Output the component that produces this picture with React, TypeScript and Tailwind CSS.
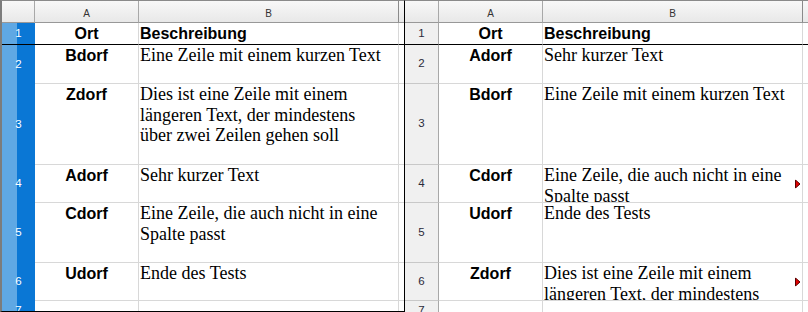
import React from "react";

type Row = { n: number; a: string; b: string[]; mark?: boolean };

const SANS = "font-['Liberation_Sans',Arial,sans-serif]";
const SERIF = "font-['Liberation_Serif','Times_New_Roman',serif]";

const leftRows: Row[] = [
  { n: 1, a: "Ort", b: ["Beschreibung"] },
  { n: 2, a: "Bdorf", b: ["Eine Zeile mit einem kurzen Text"] },
  {
    n: 3,
    a: "Zdorf",
    b: [
      "Dies ist eine Zeile mit einem",
      "längeren Text, der mindestens",
      "über zwei Zeilen gehen soll",
    ],
  },
  { n: 4, a: "Adorf", b: ["Sehr kurzer Text"] },
  { n: 5, a: "Cdorf", b: ["Eine Zeile, die auch nicht in eine", "Spalte passt"] },
  { n: 6, a: "Udorf", b: ["Ende des Tests"] },
  { n: 7, a: "", b: [] },
];

const rightRows: Row[] = [
  { n: 1, a: "Ort", b: ["Beschreibung"] },
  { n: 2, a: "Adorf", b: ["Sehr kurzer Text"] },
  { n: 3, a: "Bdorf", b: ["Eine Zeile mit einem kurzen Text"] },
  { n: 4, a: "Cdorf", b: ["Eine Zeile, die auch nicht in eine", "Spalte passt"], mark: true },
  { n: 5, a: "Udorf", b: ["Ende des Tests"] },
  {
    n: 6,
    a: "Zdorf",
    b: [
      "Dies ist eine Zeile mit einem",
      "längeren Text, der mindestens",
      "über zwei Zeilen gehen soll",
    ],
    mark: true,
  },
  { n: 7, a: "", b: [] },
];

const HDR =
  "bg-linear-to-b from-[#f8f8f8] to-[#e8e8e8] border-b border-b-[#989898]";

function Marker() {
  return (
    <svg
      className="absolute right-[1px] top-1/2 -translate-y-1/2"
      width="6"
      height="9"
      viewBox="0 0 6 9"
    >
      <polygon points="0.5,0.5 5,4.5 0.5,8.5" fill="#e00000" stroke="#5a0000" strokeWidth="1" />
    </svg>
  );
}

function Sheet({ rows, blue, gridClass }: { rows: Row[]; blue: boolean; gridClass: string }) {
  return (
    <div className={`grid ${gridClass}`}>
      <div className={`${HDR} border-r border-r-[#a8a8a8]`} />
      <div className={`${HDR} border-r border-r-[#a8a8a8] text-center text-[10px] leading-[10px] pt-[8px] text-[#333] ${SANS}`}>
        A
      </div>
      <div className={`${HDR} border-r border-r-[#8a8a8a] text-center text-[10px] leading-[10px] pt-[8px] text-[#333] ${SANS}`}>
        B
      </div>
      <div className={HDR} />
      {rows.map((r) => {
        const first = r.n === 1;
        const last = r.n === 7;
        const bb = first
          ? "border-b border-b-black"
          : last
          ? ""
          : "border-b border-b-[#d8d8d8]";
        const hb = first
          ? "border-b border-b-black"
          : last
          ? ""
          : blue
          ? ""
          : "border-b border-b-[#c8c8c8]";
        return (
          <React.Fragment key={r.n}>
            <div
              className={`overflow-hidden ${hb} ${
                blue
                  ? "bg-[linear-gradient(to_right,#5fa8e4_15px,#0a77d5_15px)] text-white"
                  : "bg-[#f0f0f0] border-r border-r-[#a8a8a8] text-[#2a2a3a]"
              } ${SANS} text-[11.5px]`}
            >
              <div className={`flex items-center justify-center ${last ? "h-[20px]" : "h-full"}`}>
                {r.n}
              </div>
            </div>
            <div
              className={`overflow-hidden border-r border-r-[#d8d8d8] ${bb} ${SANS} font-bold text-[16px] leading-[18px] text-black text-center ${
                first ? "flex items-center justify-center" : "pt-[2px]"
              }`}
            >
              {r.a}
            </div>
            <div
              className={`relative overflow-hidden border-r border-r-[#d8d8d8] ${bb} pl-[1px] text-black ${
                first
                  ? `${SANS} font-bold text-[16px] leading-[18px] flex items-center`
                  : `${SERIF} text-[18px] leading-[20.7px] pt-0`
              }`}
            >
              {r.b.map((line, i) => (
                <div key={i} className="whitespace-nowrap">
                  {line}
                </div>
              ))}
              {r.mark && <Marker />}
            </div>
            <div className={`${bb}`} />
          </React.Fragment>
        );
      })}
    </div>
  );
}

export default function App() {
  return (
    <div className="flex w-[808px] h-[312px] overflow-hidden bg-white">
      <div className="w-[405px] h-[312px] border-l-2 border-l-[#7c7c7c] border-t border-t-[#8a8a8a] border-r border-r-black border-b border-b-black">
        <Sheet
          rows={leftRows}
          blue={true}
          gridClass="grid-cols-[33px_104px_260px_5px] grid-rows-[22px_22px_39px_81px_38px_60px_38px_10px]"
        />
      </div>
      <div className="w-[403px] h-[312px] border-t border-t-[#8a8a8a]">
        <Sheet
          rows={rightRows}
          blue={false}
          gridClass="grid-cols-[34px_104px_260px_5px] grid-rows-[22px_22px_39px_81px_38px_60px_38px_11px]"
        />
      </div>
    </div>
  );
}
